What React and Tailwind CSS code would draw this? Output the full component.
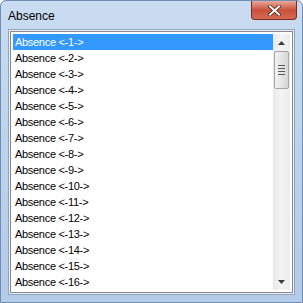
import React from "react";

function ScrollBar() {
  return (
    <div className="my-[2px] mr-[2px] flex flex-col w-[17px] bg-gradient-to-r from-[#e9e9e9] via-[#f4f4f4] to-[#ececec]">
      <div className="h-[17px] flex items-center justify-center">
        <svg width="7" height="4" viewBox="0 0 7 4"><path d="M0 4 L3.5 0 L7 4 Z" fill="#3a3a3a" /></svg>
      </div>
      <div className="mx-[1px] h-[38px] rounded-[2px] border border-[#a6a6a6] bg-gradient-to-r from-[#f3f3f3] via-[#e6e6e6] to-[#d6d6d6] flex flex-col items-center justify-center gap-[2px]">
        <div className="w-[7px] h-[1px] bg-[#5a5a5a]" />
        <div className="w-[7px] h-[1px] bg-[#5a5a5a]" />
        <div className="w-[7px] h-[1px] bg-[#5a5a5a]" />
        <div className="w-[7px] h-[1px] bg-[#5a5a5a]" />
      </div>
      <div className="flex-1" />
      <div className="h-[17px] flex items-center justify-center">
        <svg width="7" height="4" viewBox="0 0 7 4"><path d="M0 0 L3.5 4 L7 0 Z" fill="#3a3a3a" /></svg>
      </div>
    </div>
  );
}

export default function App() {
  const items = Array.from({ length: 16 }, (_, i) => `Absence <-${i + 1}->`);
  return (
    <div
      className="w-[303px] h-[303px] flex flex-col border border-[#6f8cb3] rounded-t-[6px] bg-gradient-to-b from-[#c9dcf1] via-[#bcd2ec] to-[#b3cbe8] overflow-hidden"
      style={{ fontFamily: '"Liberation Sans", Arial, sans-serif' }}
    >
      <div className="h-[28px] flex items-start justify-between">
        <div className="pl-[7px] pt-[8px] text-[12px] leading-[14px] text-black">Absence</div>
        <div className="mr-[5px] w-[46px] h-[19px] rounded-b-[4px] border border-t-0 border-[#7a2a20] bg-gradient-to-b from-[#e9a99b] via-[#c8503b] to-[#d46a52] flex items-center justify-center">
          <svg width="13" height="11" viewBox="0 0 13 11">
            <path d="M2 1.5 L11 9.5 M11 1.5 L2 9.5" stroke="#5a1c14" strokeWidth="3.6" strokeLinecap="square" />
            <path d="M2 1.5 L11 9.5 M11 1.5 L2 9.5" stroke="#ffffff" strokeWidth="2" strokeLinecap="square" />
          </svg>
        </div>
      </div>
      <div className="flex-1 mx-[7px] mb-[7px] border border-[#8ea5c2] bg-[#f0f0f0] p-[1px] flex">
        <div className="flex-1 flex border border-[#828790] bg-white">
          <div className="flex-1 pl-[2px] pt-[2px] overflow-hidden">
            {items.map((t, i) => (
              <div
                key={t}
                className={
                  "h-[16px] pl-[2px] pt-[1px] text-[11px] leading-[15px] tracking-[-0.3px] whitespace-nowrap " +
                  (i === 0 ? "bg-[#3399ff] text-white" : "text-black")
                }
              >
                {t}
              </div>
            ))}
          </div>
          <ScrollBar />
        </div>
      </div>
    </div>
  );
}
